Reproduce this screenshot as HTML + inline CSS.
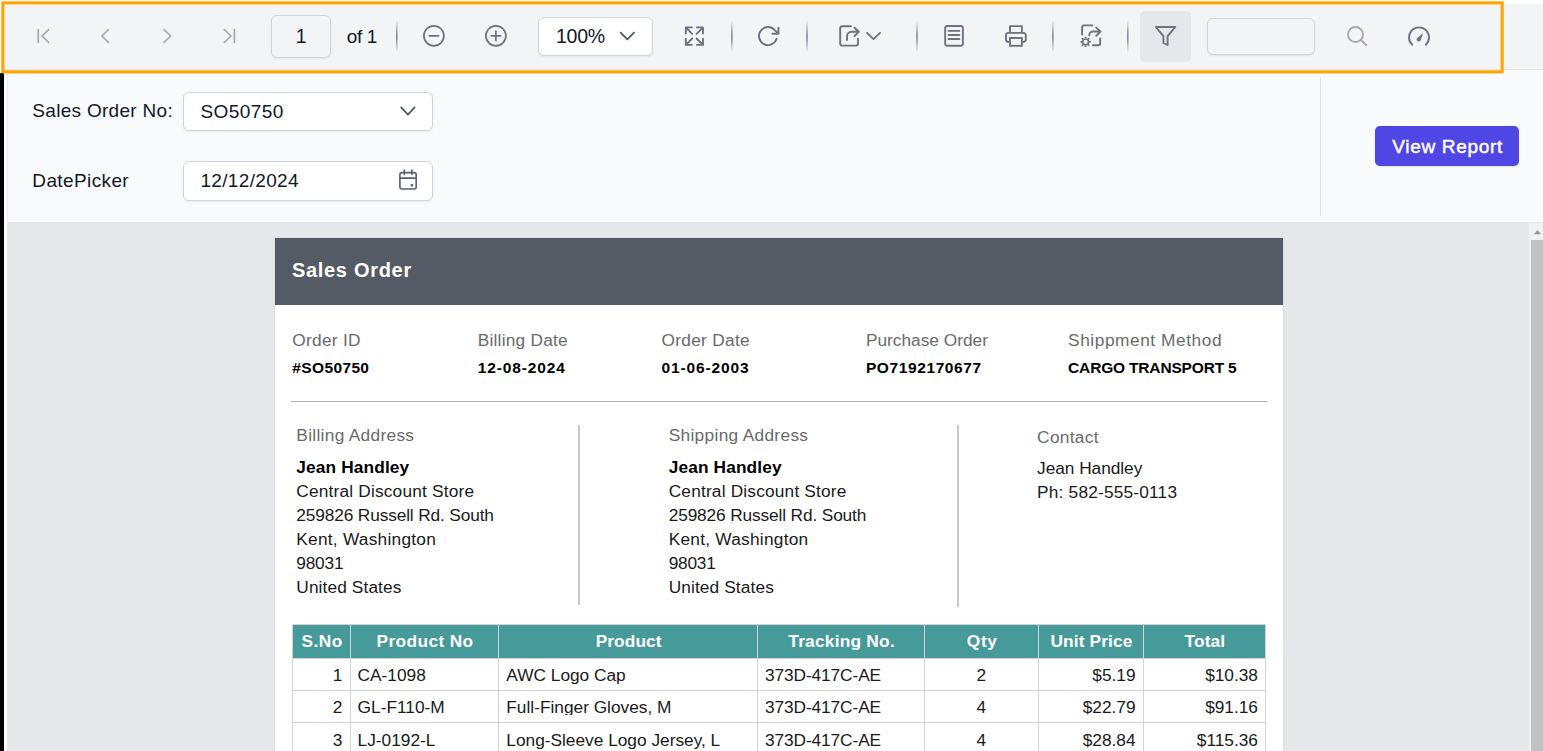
<!DOCTYPE html>
<html lang="en">
<head>
<meta charset="utf-8">
<title>Sales Order Report</title>
<style>
html,body{margin:0;padding:0;}
body{width:1543px;height:751px;overflow:hidden;background:#ffffff;position:relative;font-family:"Liberation Sans",sans-serif;}
.a{position:absolute;box-sizing:border-box;}
.t{position:absolute;white-space:pre;font-family:"Liberation Sans",sans-serif;line-height:24px;}
.sep{position:absolute;top:20px;width:2px;height:33px;background:linear-gradient(to bottom,rgba(156,163,175,0) 0%,rgba(130,137,150,.95) 45%,rgba(130,137,150,.95) 55%,rgba(156,163,175,0) 100%);}
.inp{position:absolute;box-sizing:border-box;border:1px solid #d1d5db;border-radius:6px;box-shadow:0 1px 2px rgba(0,0,0,.07);}
#clip{position:absolute;left:275px;top:238px;width:1008px;height:513px;overflow:hidden;background:#fff;box-shadow:0 0 2px rgba(0,0,0,.13);}
</style>
</head>
<body>
<!-- toolbar -->
<div class="a" style="left:4px;top:4px;width:1539px;height:66px;background:#f3f4f6;border-bottom:1px solid #e2e4e9;"></div>
<!-- param area -->
<div class="a" style="left:7px;top:70px;width:1536px;height:153px;background:#f9fafb;border-bottom:1px solid #e5e7eb;border-left:1px solid #eceef1;"></div>
<div class="a" style="left:1320px;top:77px;width:1px;height:139px;background:#e3e5e9;"></div>
<!-- viewer -->
<div class="a" style="left:7px;top:223px;width:1522px;height:528px;background:#e5e7eb;"></div>
<!-- scrollbar -->
<div class="a" style="left:1529px;top:223px;width:14px;height:528px;background:#f1f1f1;"></div>
<div class="a" style="left:1531px;top:240px;width:12px;height:511px;background:#c1c1c1;"></div>
<!-- black strip -->
<div class="a" style="left:0;top:73px;width:4px;height:678px;background:#000;"></div>
<!-- orange highlight -->

<!-- toolbar controls -->
<div class="inp" style="left:271px;top:15px;width:60px;height:43px;background:#f3f4f6;"></div>
<div class="inp" style="left:538px;top:17px;width:115px;height:39px;background:#fff;"></div>
<div class="a" style="left:1140px;top:11px;width:51px;height:51px;background:#e5e7eb;border-radius:5px;"></div>
<div class="inp" style="left:1207px;top:18px;width:108px;height:37px;background:#f3f4f6;"></div>

<!-- param controls -->
<div class="inp" style="left:183px;top:92px;width:250px;height:39px;background:#fff;"></div>
<div class="inp" style="left:183px;top:161px;width:250px;height:40px;background:#fff;"></div>
<div class="a" style="left:1375px;top:126px;width:144px;height:40px;background:#4f46e5;border-radius:5px;box-shadow:0 1px 2px rgba(0,0,0,.1);"></div>

<!-- report page -->
<div id="clip">
  <div class="a" style="left:0;top:0;width:1008px;height:66.5px;background:#545b64;"></div>
  <div class="a" style="left:16px;top:163px;width:976px;height:1px;background:#b2b2b2;"></div>
  <div class="a" style="left:303.3px;top:187px;width:1.6px;height:180px;background:#c8c8c8;"></div>
  <div class="a" style="left:682.3px;top:187px;width:1.6px;height:182px;background:#c8c8c8;"></div>
  <!-- table header -->
  <div class="a" style="left:17.6px;top:386.5px;width:973px;height:34px;background:#469a9a;"></div>
</div>

<!-- icons + table grid -->
<svg class="a" style="left:0;top:0;" width="1543" height="751" viewBox="0 0 1543 751" fill="none" stroke-linecap="round" stroke-linejoin="round">
  <defs><linearGradient id="sg" gradientUnits="userSpaceOnUse" x1="0" y1="20" x2="0" y2="53">
  <stop offset="0" stop-color="#8a90a0" stop-opacity="0"/><stop offset=".42" stop-color="#7f8696" stop-opacity="1"/><stop offset=".58" stop-color="#7f8696" stop-opacity="1"/><stop offset="1" stop-color="#8a90a0" stop-opacity="0"/></linearGradient></defs>
 <g stroke="url(#sg)" stroke-width="1.5" stroke-linecap="butt">
  <path d="M396.8 20V53"/>
  <path d="M731.9 20V53"/>
  <path d="M807.0 20V53"/>
  <path d="M917.0 20V53"/>
  <path d="M1052.9 20V53"/>
  <path d="M1127.8 20V53"/>
 </g>
 <!-- nav (disabled) -->
 <g stroke="#a4a9b3" stroke-width="1.7">
  <path d="M38.2 29.6V42.3M48.6 29.6L42 36L48.6 42.3"/>
  <path d="M108.4 29.6L101.8 36L108.4 42.3"/>
  <path d="M164.1 29.6L170.7 36L164.1 42.3"/>
  <path d="M224.4 29.6L231 36L224.4 42.3M234.4 29.6V42.3"/>
 </g>
 <!-- search (disabled) -->
 <g stroke="#a4a9b3" stroke-width="1.9">
  <circle cx="1355.5" cy="34.5" r="7.5"/>
  <path d="M1361 40L1366.2 45.2"/>
 </g>
 <g stroke="#6b7280" stroke-width="1.7">
  <!-- zoom out / in -->
  <circle cx="433.9" cy="35.8" r="10"/>
  <path d="M429.2 35.8H438.6"/>
  <circle cx="495.9" cy="35.8" r="10"/>
  <path d="M491.2 35.8H500.6M495.9 31.1V40.5"/>
 </g>
 <g stroke="#6b7280" stroke-width="1.9">
  <!-- fit page -->
  <path d="M685.8 33.5V27.4H691.9M685.8 27.4L692.2 33.8"/>
  <path d="M703 33.5V27.4H696.9M703 27.4L696.6 33.8"/>
  <path d="M685.8 38.8V44.9H691.9M685.8 44.9L692.2 38.5"/>
  <path d="M703 38.8V44.9H696.9M703 44.9L696.6 38.5"/>
  <!-- refresh -->
  <path d="M776.6 38.8A9 9 0 1 1 774.6 29.9L778.5 33.7M778.5 27.6V33.7H772.4"/>
  <!-- export -->
  <path d="M850.8 26.2H842.2a2 2 0 0 0 -2 2V43.6a2 2 0 0 0 2 2H856a2 2 0 0 0 2 -2V38.7"/>
  <path d="M847 40V36.3a4.5 4.5 0 0 1 4.5 -4.5H858.6M854.5 27.7L858.8 31.8L854.5 36.1"/>
  <!-- page setup -->
  <rect x="945.2" y="26" width="17.7" height="19.8" rx="2.2"/>
  <path d="M948.6 30.9H959.4M948.6 35H959.4M948.6 39H959.4" stroke-width="1.8"/>
  <!-- print -->
  <path d="M1010 32.6V26.1H1021.9V32.6"/>
  <path d="M1010 41.9H1008.4a2.4 2.4 0 0 1 -2.4 -2.4V35.3a2.4 2.4 0 0 1 2.4 -2.4H1023.4a2.4 2.4 0 0 1 2.4 2.4V39.5a2.4 2.4 0 0 1 -2.4 2.4H1021.9"/>
  <rect x="1010" y="38" width="11.9" height="7.8" stroke-linejoin="miter"/>
  <!-- export setup -->
  <path d="M1092.4 25.4H1084.1a2 2 0 0 0 -2 2V34.5"/>
  <path d="M1089.2 35.3a3.8 3.8 0 0 1 3.8 -3.8H1100.4M1096.2 27.6L1100.6 31.6L1096.2 35.7"/>
  <path d="M1100.2 38.4V43.2a2 2 0 0 1 -2 2H1092.9"/>
  <!-- filter -->
  <path d="M1155.8 27H1175.3L1167.6 36.2V45L1163.4 43V36.2Z"/>
  <!-- gauge -->
  <path d="M1412.2 44.7A10 10 0 1 1 1425.8 44.7"/>
 </g>
 <!-- chevrons -->
 <g stroke="#4b5563" stroke-width="1.7">
  <path d="M620.6 32.6L627.3 39.4L634 32.6"/>
  <path d="M401.2 107.4L407.9 114.6L414.6 107.4"/>
 </g>
 <path d="M867 32.8L873.5 39.2L880 32.8" stroke="#6b7280" stroke-width="1.8"/>
 <!-- gear -->
 <g stroke="#6b7280">
  <circle cx="1085.6" cy="41.9" r="2.9" stroke-width="1.6"/>
  <path d="M1089.20 41.90L1090.80 41.90M1088.15 44.45L1089.28 45.58M1085.60 45.50L1085.60 47.10M1083.05 44.45L1081.92 45.58M1082.00 41.90L1080.40 41.90M1083.05 39.35L1081.92 38.22M1085.60 38.30L1085.60 36.70M1088.15 39.35L1089.28 38.22" stroke-width="1.7" stroke-linecap="butt"/>
 </g>
 <!-- gauge needle -->
 <path d="M1422.9 33.3L1420.7 40.3A2.1 2.1 0 1 1 1417.3 37.9Z" fill="#6b7280" stroke="none"/>
 <!-- calendar -->
 <g stroke="#566070" stroke-width="1.6">
  <rect x="399.9" y="172.6" width="16.3" height="16.4" rx="2"/>
  <path d="M399.9 178.1H416.2M404.3 170V174.4M411.9 170V174.4"/>
  <rect x="410.7" y="184.1" width="2.4" height="2.4" fill="#566070" stroke="none"/>
 </g>
 <!-- table grid -->
 <g stroke="#d3d3d3" stroke-width="1" stroke-linecap="butt" shape-rendering="crispEdges">
  <path d="M292.5 625V751M350.5 625V751M498.5 625V751M757.5 625V751M924.5 625V751M1038.5 625V751M1143.5 625V751M1265.5 625V751"/>
  <path d="M292 624.5H1266M292 658.5H1266M292 690.5H1266M292 722.5H1266"/>
 </g>
 <!-- scrollbar arrow -->
 <path d="M1533.9 234.2L1537.5 229.9L1541.1 234.2Z" fill="#989898" stroke="none"/>
 <!-- highlight -->
 <rect x="2.85" y="2.85" width="1499.3" height="69" stroke="#ffa500" stroke-width="3.1" stroke-linejoin="miter"/>

</svg>

<div class="t" style="left:295.87px;top:24px;font-size:19.5px;color:#111827;">1</div>
<div class="t" style="left:346.70px;top:25px;font-size:19px;color:#111827;letter-spacing:-0.334px;">of 1</div>
<div class="t" style="left:556.00px;top:24px;font-size:19.5px;color:#111827;letter-spacing:-0.258px;">100%</div>
<div class="t" style="left:32.30px;top:99px;font-size:19px;color:#111827;letter-spacing:0.298px;">Sales Order No:</div>
<div class="t" style="left:32.30px;top:169px;font-size:19px;color:#111827;letter-spacing:0.386px;">DatePicker</div>
<div class="t" style="left:200.40px;top:100px;font-size:19px;color:#111827;letter-spacing:0.434px;">SO50750</div>
<div class="t" style="left:200.40px;top:169px;font-size:19px;color:#111827;letter-spacing:0.345px;">12/12/2024</div>
<div class="t" style="left:1392.20px;top:135px;font-size:19px;color:#ffffff;letter-spacing:0.704px;-webkit-text-stroke:0.45px #fff;">View Report</div>
<div class="t" style="left:291.90px;top:258px;font-size:20px;color:#ffffff;font-weight:700;letter-spacing:0.700px;">Sales Order</div>
<div class="t" style="left:292.30px;top:328px;font-size:17.3px;color:#6a6a6a;letter-spacing:0.276px;">Order ID</div>
<div class="t" style="left:292.30px;top:356px;font-size:15.5px;color:#000000;font-weight:700;letter-spacing:0.368px;">#SO50750</div>
<div class="t" style="left:477.70px;top:328px;font-size:17.3px;color:#6a6a6a;letter-spacing:0.234px;">Billing Date</div>
<div class="t" style="left:477.70px;top:356px;font-size:15.5px;color:#000000;font-weight:700;letter-spacing:0.889px;">12-08-2024</div>
<div class="t" style="left:661.40px;top:328px;font-size:17.3px;color:#6a6a6a;letter-spacing:0.313px;">Order Date</div>
<div class="t" style="left:661.40px;top:356px;font-size:15.5px;color:#000000;font-weight:700;letter-spacing:0.889px;">01-06-2003</div>
<div class="t" style="left:865.90px;top:328px;font-size:17.3px;color:#6a6a6a;letter-spacing:0.009px;">Purchase Order</div>
<div class="t" style="left:865.90px;top:356px;font-size:15.5px;color:#000000;font-weight:700;letter-spacing:0.608px;">PO7192170677</div>
<div class="t" style="left:1068.10px;top:328px;font-size:17.3px;color:#6a6a6a;letter-spacing:0.556px;">Shippment Method</div>
<div class="t" style="left:1068.10px;top:356px;font-size:15.5px;color:#000000;font-weight:700;letter-spacing:-0.173px;">CARGO TRANSPORT 5</div>
<div class="t" style="left:296.30px;top:423px;font-size:17.3px;color:#6a6a6a;letter-spacing:0.310px;">Billing Address</div>
<div class="t" style="left:296.30px;top:455px;font-size:17.3px;color:#000000;font-weight:700;letter-spacing:0.134px;">Jean Handley</div>
<div class="t" style="left:296.30px;top:479px;font-size:17.3px;color:#1a1a1a;letter-spacing:0.183px;">Central Discount Store</div>
<div class="t" style="left:296.30px;top:503px;font-size:17.3px;color:#1a1a1a;letter-spacing:-0.135px;">259826 Russell Rd. South</div>
<div class="t" style="left:296.30px;top:527px;font-size:17.3px;color:#1a1a1a;letter-spacing:0.248px;">Kent, Washington</div>
<div class="t" style="left:296.30px;top:551px;font-size:17.3px;color:#1a1a1a;letter-spacing:-0.216px;">98031</div>
<div class="t" style="left:296.30px;top:575px;font-size:17.3px;color:#1a1a1a;letter-spacing:0.113px;">United States</div>
<div class="t" style="left:668.70px;top:423px;font-size:17.3px;color:#6a6a6a;letter-spacing:0.319px;">Shipping Address</div>
<div class="t" style="left:668.70px;top:455px;font-size:17.3px;color:#000000;font-weight:700;letter-spacing:0.134px;">Jean Handley</div>
<div class="t" style="left:668.70px;top:479px;font-size:17.3px;color:#1a1a1a;letter-spacing:0.183px;">Central Discount Store</div>
<div class="t" style="left:668.70px;top:503px;font-size:17.3px;color:#1a1a1a;letter-spacing:-0.135px;">259826 Russell Rd. South</div>
<div class="t" style="left:668.70px;top:527px;font-size:17.3px;color:#1a1a1a;letter-spacing:0.248px;">Kent, Washington</div>
<div class="t" style="left:668.70px;top:551px;font-size:17.3px;color:#1a1a1a;letter-spacing:-0.216px;">98031</div>
<div class="t" style="left:668.70px;top:575px;font-size:17.3px;color:#1a1a1a;letter-spacing:0.113px;">United States</div>
<div class="t" style="left:1037.10px;top:425px;font-size:17.3px;color:#6a6a6a;letter-spacing:0.306px;">Contact</div>
<div class="t" style="left:1037.10px;top:456px;font-size:17.3px;color:#1a1a1a;letter-spacing:-0.044px;">Jean Handley</div>
<div class="t" style="left:1037.10px;top:480px;font-size:17.3px;color:#1a1a1a;letter-spacing:0.188px;">Ph: 582-555-0113</div>
<div class="t" style="left:301.60px;top:629px;font-size:17.3px;color:#ffffff;font-weight:700;letter-spacing:0.408px;">S.No</div>
<div class="t" style="left:376.55px;top:629px;font-size:17.3px;color:#ffffff;font-weight:700;letter-spacing:0.386px;">Product No</div>
<div class="t" style="left:595.70px;top:629px;font-size:17.3px;color:#ffffff;font-weight:700;letter-spacing:0.084px;">Product</div>
<div class="t" style="left:788.30px;top:629px;font-size:17.3px;color:#ffffff;font-weight:700;letter-spacing:0.244px;">Tracking No.</div>
<div class="t" style="left:966.85px;top:629px;font-size:17.3px;color:#ffffff;font-weight:700;letter-spacing:0.644px;">Qty</div>
<div class="t" style="left:1050.45px;top:629px;font-size:17.3px;color:#ffffff;font-weight:700;letter-spacing:0.136px;">Unit Price</div>
<div class="t" style="left:1184.50px;top:629px;font-size:17.3px;color:#ffffff;font-weight:700;letter-spacing:0.150px;">Total</div>
<div class="t" style="left:332.68px;top:663px;font-size:17.3px;color:#1a1a1a;height:21px;overflow:hidden;">1</div>
<div class="t" style="left:357.60px;top:663px;font-size:17.3px;color:#1a1a1a;height:21px;overflow:hidden;">CA-1098</div>
<div class="t" style="left:506.30px;top:663px;font-size:17.3px;color:#1a1a1a;height:21px;overflow:hidden;">AWC Logo Cap</div>
<div class="t" style="left:765.00px;top:663px;font-size:17.3px;color:#1a1a1a;letter-spacing:-0.100px;height:21px;overflow:hidden;">373D-417C-AE</div>
<div class="t" style="left:976.39px;top:663px;font-size:17.3px;color:#1a1a1a;height:21px;overflow:hidden;">2</div>
<div class="t" style="left:1092.35px;top:663px;font-size:17.3px;color:#1a1a1a;height:21px;overflow:hidden;">$5.19</div>
<div class="t" style="left:1205.14px;top:663px;font-size:17.3px;color:#1a1a1a;height:21px;overflow:hidden;">$10.38</div>
<div class="t" style="left:332.68px;top:695px;font-size:17.3px;color:#1a1a1a;height:20px;overflow:hidden;">2</div>
<div class="t" style="left:357.60px;top:695px;font-size:17.3px;color:#1a1a1a;height:20px;overflow:hidden;">GL-F110-M</div>
<div class="t" style="left:506.30px;top:695px;font-size:17.3px;color:#1a1a1a;height:20px;overflow:hidden;">Full-Finger Gloves, M</div>
<div class="t" style="left:765.00px;top:695px;font-size:17.3px;color:#1a1a1a;letter-spacing:-0.100px;height:20px;overflow:hidden;">373D-417C-AE</div>
<div class="t" style="left:976.39px;top:695px;font-size:17.3px;color:#1a1a1a;height:20px;overflow:hidden;">4</div>
<div class="t" style="left:1082.74px;top:695px;font-size:17.3px;color:#1a1a1a;height:20px;overflow:hidden;">$22.79</div>
<div class="t" style="left:1205.14px;top:695px;font-size:17.3px;color:#1a1a1a;height:20px;overflow:hidden;">$91.16</div>
<div class="t" style="left:332.68px;top:728px;font-size:17.3px;color:#1a1a1a;height:21px;overflow:hidden;">3</div>
<div class="t" style="left:357.60px;top:728px;font-size:17.3px;color:#1a1a1a;height:21px;overflow:hidden;">LJ-0192-L</div>
<div class="t" style="left:506.30px;top:728px;font-size:17.3px;color:#1a1a1a;height:21px;overflow:hidden;">Long-Sleeve Logo Jersey, L</div>
<div class="t" style="left:765.00px;top:728px;font-size:17.3px;color:#1a1a1a;letter-spacing:-0.100px;height:21px;overflow:hidden;">373D-417C-AE</div>
<div class="t" style="left:976.39px;top:728px;font-size:17.3px;color:#1a1a1a;height:21px;overflow:hidden;">4</div>
<div class="t" style="left:1082.74px;top:728px;font-size:17.3px;color:#1a1a1a;height:21px;overflow:hidden;">$28.84</div>
<div class="t" style="left:1196.81px;top:728px;font-size:17.3px;color:#1a1a1a;height:21px;overflow:hidden;">$115.36</div>
</body>
</html>
